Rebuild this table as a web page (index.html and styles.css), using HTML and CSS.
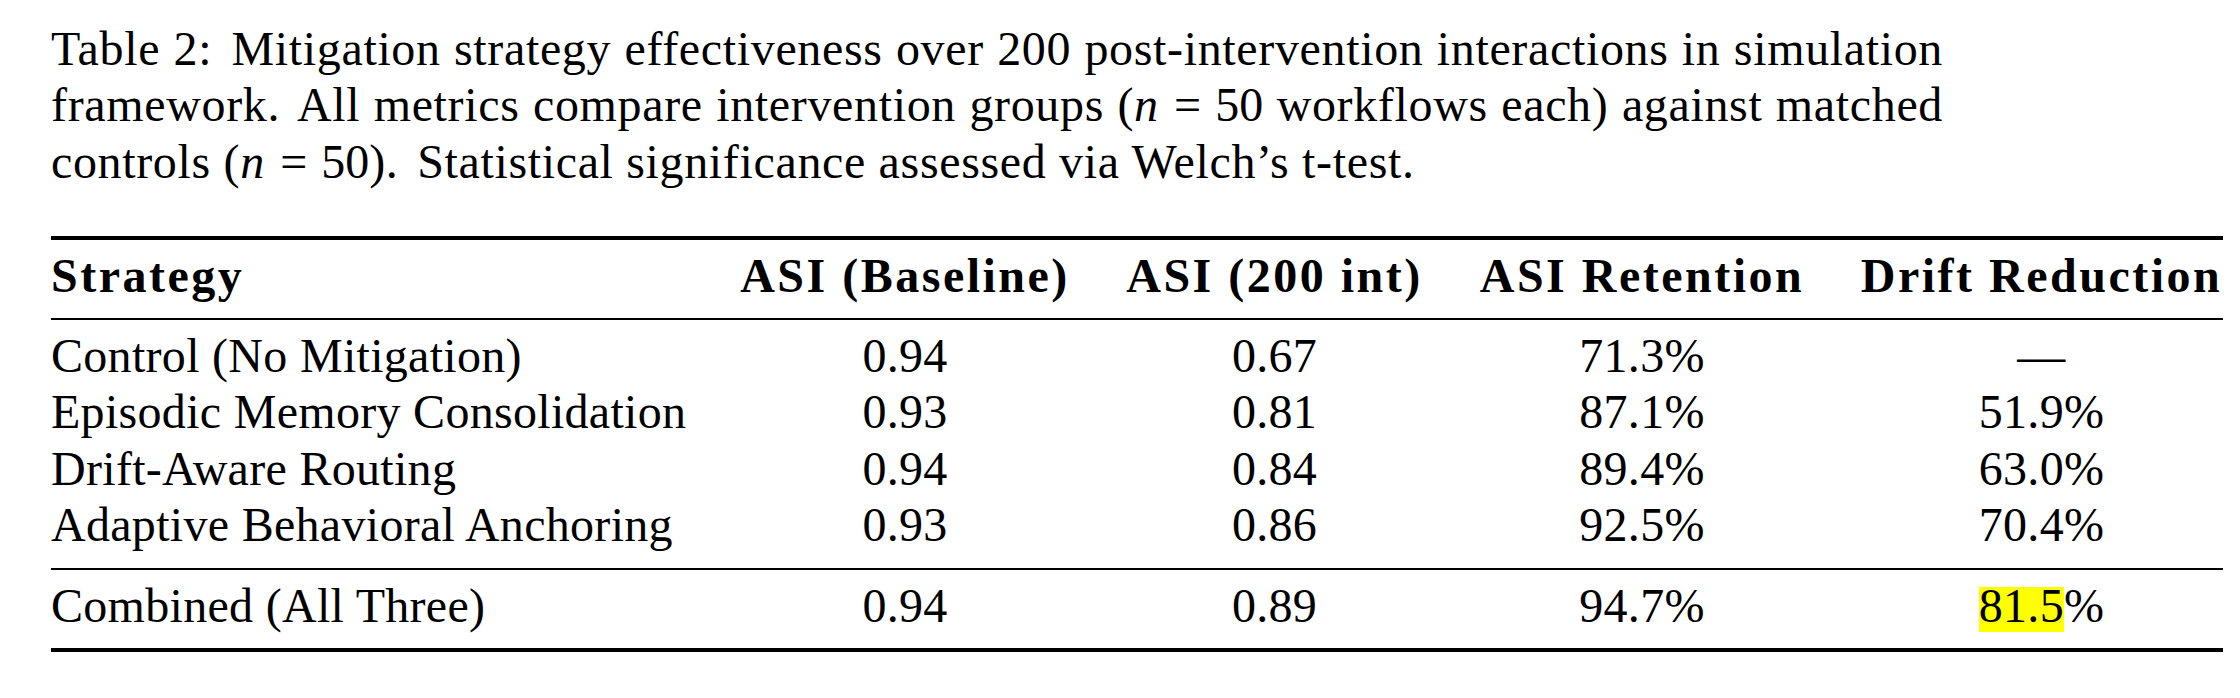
FILE: index.html
```html
<!DOCTYPE html>
<html lang="en">
<head>
<meta charset="utf-8">
<title>Table 2</title>
<link rel="stylesheet" href="styles.css">
</head>
<body>
<div class="page">
  <p class="caption">
    <span class="line just">Table 2:<span class="sp"></span> Mitigation strategy effectiveness over 200 post-intervention interactions in simulation</span>
    <span class="line just">framework.<span class="sp"></span> All metrics compare intervention groups (<span class="math"><i>n</i> = 50</span> workflows each) against matched</span>
    <span class="line">controls (<span class="math"><i>n</i> = 50</span>).<span class="sp"></span> Statistical significance assessed via Welch&rsquo;s t-test.</span>
  </p>
  <table class="results">
    <colgroup>
      <col class="c1"><col class="c2"><col class="c3"><col class="c4"><col class="c5">
    </colgroup>
    <thead>
      <tr>
        <th class="left">Strategy</th>
        <th>ASI (Baseline)</th>
        <th>ASI (200 int)</th>
        <th>ASI Retention</th>
        <th class="last">Drift Reduction</th>
      </tr>
    </thead>
    <tbody class="main">
      <tr class="first">
        <td class="left">Control (No Mitigation)</td><td>0.94</td><td>0.67</td><td>71.3%</td><td class="last">&mdash;</td>
      </tr>
      <tr>
        <td class="left">Episodic Memory Consolidation</td><td>0.93</td><td>0.81</td><td>87.1%</td><td class="last">51.9%</td>
      </tr>
      <tr>
        <td class="left">Drift-Aware Routing</td><td>0.94</td><td>0.84</td><td>89.4%</td><td class="last">63.0%</td>
      </tr>
      <tr class="end">
        <td class="left">Adaptive Behavioral Anchoring</td><td>0.93</td><td>0.86</td><td>92.5%</td><td class="last">70.4%</td>
      </tr>
    </tbody>
    <tbody class="combined">
      <tr>
        <td class="left">Combined (All Three)</td><td>0.94</td><td>0.89</td><td>94.7%</td><td class="last"><span class="hl">81.5</span>%</td>
      </tr>
    </tbody>
  </table>
</div>
</body>
</html>
```

FILE: styles.css
```css
html, body {
  margin: 0;
  padding: 0;
  background: #ffffff;
}

body {
  font-family: "Liberation Serif", "Times New Roman", serif;
  color: #000000;
  font-size: 48px;
}

.page {
  padding: 20.5px 0 0 51px;
}

.caption {
  margin: 0;
  width: 1892px;
  line-height: 56.5px;
  letter-spacing: 0.65px;
}

.caption .line {
  display: block;
  text-align: left;
}

.caption .line.just {
  text-align: justify;
  text-align-last: justify;
}

.caption .sp {
  display: inline-block;
  width: 6px;
}

.math {
  display: inline-block;
  letter-spacing: 0;
  word-spacing: 2px;
}

.math i {
  font-style: italic;
  padding-right: 2px;
}

.results {
  margin-top: 46px;
  width: 2172px;
  table-layout: fixed;
  border-collapse: separate;
  border-spacing: 0;
}

.results col.c1 { width: 661px; }
.results col.c2 { width: 386px; }
.results col.c3 { width: 353px; }
.results col.c4 { width: 382px; }
.results col.c5 { width: 390px; }

.results th,
.results td {
  padding: 0;
  line-height: 56.5px;
  text-align: center;
  white-space: nowrap;
  vertical-align: baseline;
}

.results td {
  font-weight: normal;
  letter-spacing: 0.3px;
}

.results th {
  font-weight: bold;
  letter-spacing: 2.5px;
  border-top: 4px solid #000;
  border-bottom: 2px solid #000;
  padding-top: 8.3px;
  padding-bottom: 13.2px;
}

.results .left {
  text-align: left;
}

.results .last {
  padding-left: 27px;
}

.results tr.first td {
  padding-top: 8px;
}

.results tr.end td {
  padding-bottom: 14px;
}

.results .combined td {
  border-top: 2px solid #000;
  border-bottom: 4px solid #000;
  padding-top: 8px;
  padding-bottom: 13.5px;
}

.hl {
  background: linear-gradient(to bottom, transparent 8px, #ffff00 8px);
}
```
